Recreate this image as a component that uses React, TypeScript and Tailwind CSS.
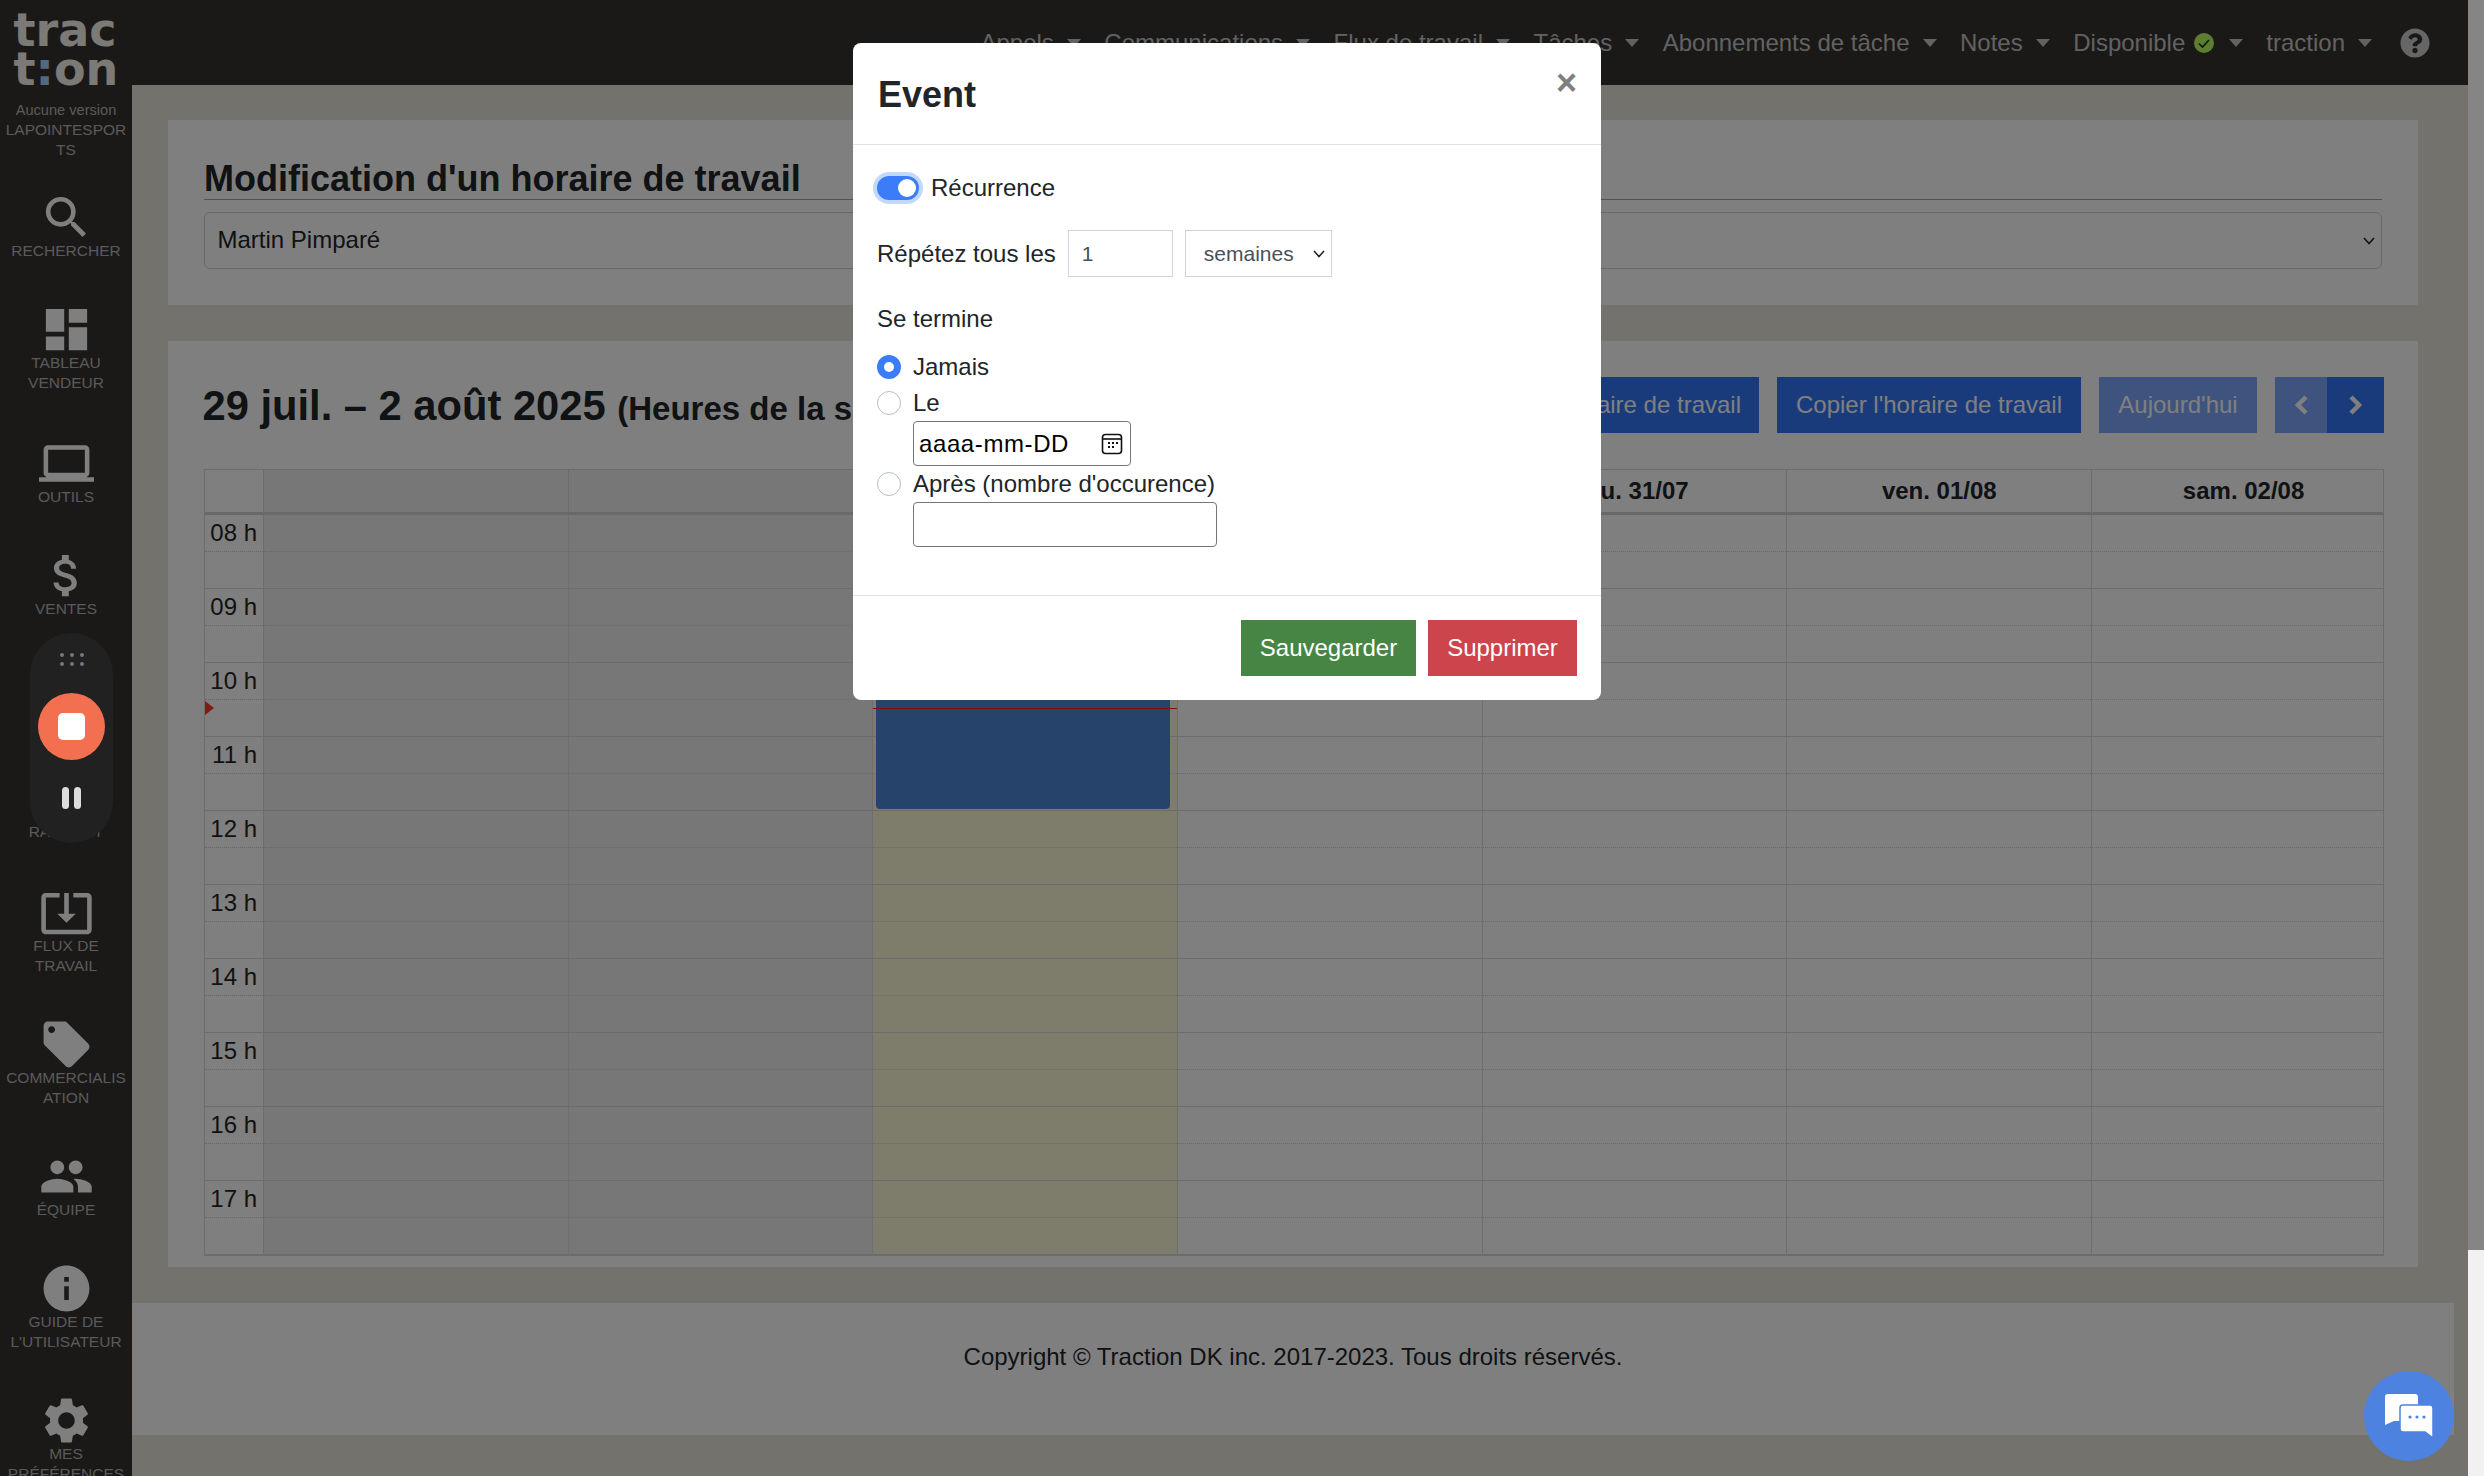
import React from "react";
import {
  MdAttachMoney,
  MdDashboard,
  MdInfo,
  MdLaptop,
  MdLocalOffer,
  MdPeople,
  MdSearch,
  MdSettings,
  MdSystemUpdateAlt,
} from "react-icons/md";
import { FaQuestionCircle } from "react-icons/fa";

const navItems = ["Appels", "Communications", "Flux de travail", "Tâches", "Abonnements de tâche", "Notes"];
const hours = ["08 h", "09 h", "10 h", "11 h", "12 h", "13 h", "14 h", "15 h", "16 h", "17 h"];
const rowTemplate = "grid grid-cols-[59px_repeat(6,304.7px)_1fr]";

const Caret = () => (
  <span className="ml-[13px] inline-block h-0 w-0 border-x-[7px] border-t-[8px] border-x-transparent border-t-[#c4c4c4]"></span>
);

const SelectChevron = () => (
  <svg className="pointer-events-none absolute top-1/2 right-[7px] -translate-y-1/2" width="12" height="8" viewBox="0 0 12 8" fill="none" stroke="#212529" strokeWidth="1.6">
    <path d="M1 1l5 5.5L11 1" />
  </svg>
);

const SideItem = ({ icon, label }: { icon: React.ReactNode; label: React.ReactNode }) => (
  <div className="flex flex-col items-center pb-[45px]">
    <div className="flex h-[46px] items-center justify-center text-white">{icon}</div>
    <div className="mt-[1px] w-full px-[4px] text-center text-[15.5px] leading-5 uppercase text-[#b4b4b4] [overflow-wrap:anywhere]">{label}</div>
  </div>
);

const Sidebar = () => (
  <aside className="h-full w-[132px] shrink-0 overflow-hidden bg-[#343230]">
    <div className="flex h-[194px] flex-col items-center pt-[11px]">
      <div className="font-['DejaVu_Sans',sans-serif] text-[46px] leading-[39px] font-bold text-[#f6f4ec]">
        <div>trac</div>
        <div>
          t<span className="text-[#a8d0ff]">:</span>on
        </div>
      </div>
      <div className="mt-[11px] w-full px-[4px] text-center text-[15.5px] leading-5 text-[#b4b4b4] [overflow-wrap:anywhere]">
        <span className="text-[14.6px]">Aucune version</span> LAPOINTESPORTS
      </div>
    </div>
    <SideItem icon={<MdSearch size={55} />} label="Rechercher" />
    <div className="pb-[2px]">
      <SideItem icon={<MdDashboard size={55} />} label={<>Tableau<br />Vendeur</>} />
    </div>
    <SideItem icon={<MdLaptop size={55} />} label="Outils" />
    <SideItem icon={<MdAttachMoney size={55} />} label="Ventes" />
    <div className="h-[111px]"></div>
    <div className="pb-[2px]">
      <SideItem icon={<div className="h-[46px]"></div>} label="Rapport" />
    </div>
    <SideItem icon={<MdSystemUpdateAlt size={55} />} label={<>Flux de<br />travail</>} />
    <SideItem icon={<MdLocalOffer size={55} />} label="Commercialisation" />
    <SideItem icon={<MdPeople size={55} />} label="Équipe" />
    <SideItem icon={<MdInfo size={55} />} label={<>Guide de<br />l'utilisateur</>} />
    <SideItem icon={<MdSettings size={55} />} label={<>Mes<br />préférences</>} />
  </aside>
);

const TopBar = () => (
  <header className="flex h-[85px] shrink-0 items-center justify-end bg-[#343230] pr-[38px] text-[24px] text-[#c4c4c4]">
    {navItems.map((item) => (
      <div key={item} className="mr-[23.5px] flex items-center whitespace-nowrap">
        {item}
        <Caret />
      </div>
    ))}
    <div className="mr-[23px] flex items-center whitespace-nowrap">
      Disponible
      <svg className="ml-[9px]" width="20" height="20" viewBox="0 0 20 20">
        <circle cx="10" cy="10" r="10" fill="#b6fe5c" />
        <path d="M5 10.5l3.5 3.5L15 7" fill="none" stroke="#1a2a10" strokeWidth="1.6" />
      </svg>
      <span className="ml-[2px] flex items-center">
        <Caret />
      </span>
    </div>
    <div className="flex items-center whitespace-nowrap">
      traction
      <Caret />
    </div>
    <FaQuestionCircle size={30} className="ml-[28px] text-[#cccccc]" />
  </header>
);

const ScheduleGrid = () => (
  <div className="border border-[#d8d8d8] text-[24px] text-[#212529]">
    <div className={`${rowTemplate} h-[45px] border-b-[3px] border-[#d0d2d6] font-bold`}>
      <div className="border-r border-[#d8d8d8]"></div>
      <div className="border-r border-[#d8d8d8] bg-[#eeeeee]"></div>
      <div className="border-r border-[#d8d8d8] bg-[#eeeeee]"></div>
      {["mar. 29/07", "mer. 30/07", "jeu. 31/07", "ven. 01/08", "sam. 02/08"].map((day) => (
        <div key={day} className="flex items-center justify-center border-r border-[#d8d8d8] last:border-r-0 last:pl-[12px]">
          {day}
        </div>
      ))}
    </div>
    <div className="relative">
      {hours.map((hour) => (
        <div key={hour} className={`${rowTemplate} h-[74px] border-b border-[#d8d8d8] last:h-[73px] last:border-b-0`}>
          <div className="border-r border-[#d8d8d8]">
            <div className="h-[37px] border-b border-dotted border-[#d0d0d0] pt-[3px] pr-[6px] text-right leading-[30px]">{hour}</div>
          </div>
          {[0, 1, 2, 3, 4, 5, 6].map((day) => (
            <div
              key={day}
              className={`border-r border-[#dddddd] last:border-r-0 ${
                day < 2 ? "bg-[#eeeeee]" : day === 2 ? "bg-[#fcfad8]" : "bg-white"
              }`}
            >
              <div className="h-[37px] border-b border-dotted border-[#d4d4d4]"></div>
            </div>
          ))}
        </div>
      ))}
      <div className="absolute top-[147px] left-[671px] h-[147px] w-[294px] rounded-[4px] bg-[#4c88d6]"></div>
      <div className="absolute top-[193px] left-[668px] h-[1px] w-[304px] bg-[#ff2020]"></div>
      <div className="absolute top-[186px] left-0 h-0 w-0 border-y-[7px] border-l-[9px] border-y-transparent border-l-[#ff3a28]"></div>
    </div>
  </div>
);

const Content = () => (
  <div className="flex min-w-0 flex-1 flex-col overflow-hidden">
    <TopBar />
    <main className="flex-1 bg-[#e6e4da] text-[#212529]">
      <div className="w-[2322px] pt-[35px]">
        <div className="flex flex-col gap-[36px] px-[36px]">
          <section className="h-[185px] bg-white px-[36px] pt-[36px]">
            <h1 className="h-[44px] border-b-[1.5px] border-[#a0a4a8] pt-[3px] text-[36px] leading-[39px] font-bold whitespace-nowrap">
              Modification d'un horaire de travail
            </h1>
            <div className="relative mt-[12px] h-[57px]">
              <select className="h-full w-full appearance-none rounded-[6px] border-[1.5px] border-[#ced4da] pb-[2px] pl-[12.5px] text-[24px]" defaultValue="Martin Pimparé">
                <option>Martin Pimparé</option>
              </select>
              <SelectChevron />
            </div>
          </section>
          <section className="h-[926px] bg-white pt-[36px] pr-[34px] pl-[36px]">
            <div className="flex h-[56px] items-center justify-between whitespace-nowrap">
              <h2 className="-ml-[1.5px] pt-[2px] text-[41.7px] font-bold">
                29 juil. – 2 août 2025 <span className="text-[33px]">(Heures de la semaine)</span>
              </h2>
              <div className="flex gap-[18px] text-[24px] text-white">
                <button className="h-[56px] bg-[#3476f6] px-[18px]">Enregistrer l'horaire de travail</button>
                <button className="h-[56px] w-[304px] bg-[#3476f6]">Copier l'horaire de travail</button>
                <button className="h-[56px] w-[158px] bg-[#7ea6ff]">Aujourd'hui</button>
                <div className="flex">
                  <button className="flex h-[56px] w-[52px] items-center justify-center bg-[#7ea6ff]">
                    <svg width="15" height="20" viewBox="0 0 15 20" fill="none" stroke="#fff" strokeWidth="4.5">
                      <path d="M12 2L4 10l8 8" />
                    </svg>
                  </button>
                  <button className="flex h-[56px] w-[57px] items-center justify-center bg-[#3476f6]">
                    <svg width="15" height="20" viewBox="0 0 15 20" fill="none" stroke="#fff" strokeWidth="4.5">
                      <path d="M3 2l8 8-8 8" />
                    </svg>
                  </button>
                </div>
              </div>
            </div>
            <div className="mt-[36px]">
              <ScheduleGrid />
            </div>
          </section>
        </div>
        <footer className="mt-[36px] flex h-[132px] items-center justify-center bg-white pb-[24px] text-[24px]">
          Copyright © Traction DK inc. 2017-2023. Tous droits réservés.
        </footer>
      </div>
    </main>
  </div>
);

const Radio = ({ checked }: { checked?: boolean }) =>
  checked ? (
    <span className="h-6 w-6 shrink-0 rounded-full border-[7px] border-[#3b7cfb] bg-white"></span>
  ) : (
    <span className="h-6 w-6 shrink-0 rounded-full border-[1.5px] border-[#b8bec6] bg-white"></span>
  );

const EventModal = () => (
  <div className="absolute top-[43px] left-[853px] z-20 h-[657px] w-[748px] rounded-[8px] bg-white text-[24px] text-[#212529]">
    <div className="flex h-[102px] items-start justify-between border-b-[1.5px] border-[#dee2e6] pr-[24px] pl-[25px]">
      <h3 className="mt-[30px] text-[36px] leading-[43px] font-bold">Event</h3>
      <button className="mt-[18px] text-[36px] leading-[43px] font-bold text-[#808080]">×</button>
    </div>
    <div className="h-[451px] border-b-[1.5px] border-[#dee2e6] pt-[31px] pl-[24px]">
      <div className="flex h-6 items-center">
        <span className="flex h-6 w-[42px] items-center justify-end rounded-full bg-[#3b7cfb] pr-[3px] ring-4 ring-[#c2d8fd]">
          <span className="h-[18px] w-[18px] rounded-full bg-white"></span>
        </span>
        <span className="ml-[12px]">Récurrence</span>
      </div>
      <div className="mt-[30px] flex h-[47px] items-center">
        <span>Répétez tous les</span>
        <input
          readOnly
          value="1"
          className="ml-[12px] h-[47px] w-[105px] border-[1.5px] border-[#ced4da] px-[13px] text-[21px] text-[#495057]"
        />
        <div className="relative ml-[12px] h-[47px] w-[147px]">
          <select className="h-full w-full appearance-none border-[1.5px] border-[#ced4da] pl-[18px] text-[21px] text-[#495057]" defaultValue="semaines">
            <option>semaines</option>
          </select>
          <SelectChevron />
        </div>
      </div>
      <div className="mt-[27px] leading-[30px]">Se termine</div>
      <div className="mt-[21px] flex h-6 items-center gap-[12px]">
        <Radio checked />
        Jamais
      </div>
      <div className="mt-[12px] flex h-6 items-center gap-[12px]">
        <Radio />
        Le
      </div>
      <div className="mt-[6px] ml-[36px] flex h-[45px] w-[218px] items-center justify-between rounded-[4px] border-[1.5px] border-[#767676] pr-[7px] pl-[5px] text-black">
        <span className="tracking-[0.6px]">aaaa-mm-DD</span>
        <svg width="22" height="22" viewBox="0 0 22 22" fill="none" stroke="#111" strokeWidth="1.6">
          <rect x="1.5" y="1.5" width="19" height="19" rx="3" />
          <path d="M1.5 6h19" />
          <path d="M7 10h2M11 10h2M15 10h2M7 14h2M11 14h2" strokeWidth="2" />
        </svg>
      </div>
      <div className="mt-[6px] flex h-6 items-center gap-[12px]">
        <Radio />
        Après (nombre d'occurence)
      </div>
      <input readOnly className="mt-[6px] ml-[36px] block h-[45px] w-[304px] rounded-[4px] border-[1.5px] border-[#767676]" />
    </div>
    <div className="flex justify-end gap-[12px] pt-[24px] pr-[24px] text-white">
      <button className="h-[56px] w-[175px] bg-[#478544]">Sauvegarder</button>
      <button className="h-[56px] w-[149px] bg-[#cc444c]">Supprimer</button>
    </div>
  </div>
);

const RecorderWidget = () => (
  <div className="absolute top-[633px] left-[30px] z-20 flex h-[210px] w-[83px] flex-col items-center rounded-full bg-[#212121]">
    <div className="mt-[20px] grid grid-cols-3 gap-x-[6px] gap-y-[5px]">
      {[0, 1, 2, 3, 4, 5].map((dot) => (
        <span key={dot} className="h-[4px] w-[4px] rounded-full bg-[#77737f]"></span>
      ))}
    </div>
    <div className="mt-[27px] flex h-[67px] w-[67px] items-center justify-center rounded-full bg-[#f2704f]">
      <span className="h-[27px] w-[27px] rounded-[5px] bg-white"></span>
    </div>
    <div className="mt-[27px] flex gap-[5px]">
      <span className="h-[22px] w-[7px] rounded-full bg-[#dddddd]"></span>
      <span className="h-[22px] w-[7px] rounded-full bg-[#dddddd]"></span>
    </div>
  </div>
);

const ChatButton = () => (
  <button className="absolute top-[1371px] left-[2364px] z-20 flex h-[90px] w-[90px] items-center justify-center rounded-full bg-[#4e82e0]">
    <svg width="48" height="44" viewBox="0 0 48 44">
      <path d="M3 0h27a3 3 0 0 1 3 3v21a3 3 0 0 1-3 3H9l-9 4V3a3 3 0 0 1 3-3z" fill="#fff" />
      <path
        d="M18 11h27a3 3 0 0 1 3 3v30l-8-6H18a3 3 0 0 1-3-3V14a3 3 0 0 1 3-3z"
        fill="#fff"
        stroke="#4e82e0"
        strokeWidth="1.5"
      />
      <circle cx="25" cy="23" r="1.6" fill="#4e82e0" />
      <circle cx="32" cy="23" r="1.6" fill="#4e82e0" />
      <circle cx="39" cy="23" r="1.6" fill="#4e82e0" />
    </svg>
  </button>
);

export default function App() {
  return (
    <div className="relative flex h-[1476px] w-full overflow-hidden font-['Liberation_Sans',Arial,sans-serif]">
      <div className="flex h-full w-[2468px] shrink-0">
        <Sidebar />
        <Content />
      </div>
      <div className="flex h-full flex-1 flex-col bg-[#f1f1f1]">
        <div className="h-[1250px] bg-[#858585]"></div>
      </div>
      <div className="absolute inset-y-0 left-0 z-10 w-[2468px] bg-black/50"></div>
      <RecorderWidget />
      <EventModal />
      <ChatButton />
    </div>
  );
}
